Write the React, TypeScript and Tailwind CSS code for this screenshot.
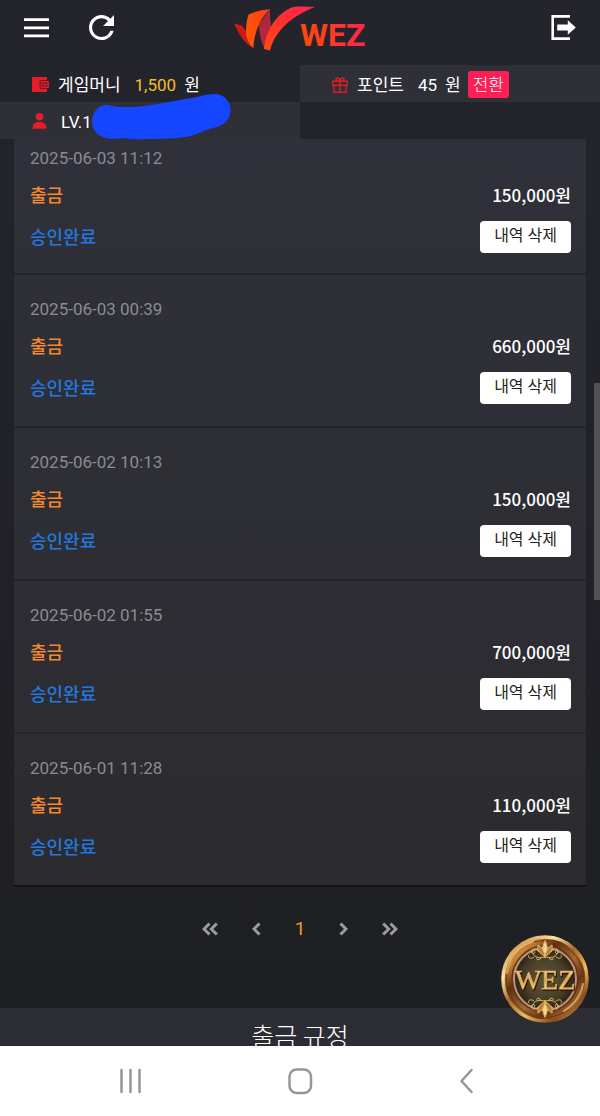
import React from 'react';

type Withdrawal = { date: string; amount: string };

const withdrawals: Withdrawal[] = [
  { date: '2025-06-03 11:12', amount: '150,000' },
  { date: '2025-06-03 00:39', amount: '660,000' },
  { date: '2025-06-02 10:13', amount: '150,000' },
  { date: '2025-06-02 01:55', amount: '700,000' },
  { date: '2025-06-01 11:28', amount: '110,000' },
];

function MenuIcon() {
  return (
    <svg width="25" height="20" viewBox="0 0 25 20" fill="none" stroke="#fff" strokeWidth="2.7" aria-hidden="true">
      <path d="M0 1.6h25M0 9.8h25M0 17.8h25" />
    </svg>
  );
}

function RefreshIcon() {
  return (
    <svg width="25" height="25" viewBox="4 4 16 16" fill="#fff" aria-hidden="true">
      <path d="M17.65 6.35A7.96 7.96 0 0 0 12 4c-4.42 0-7.99 3.58-7.99 8s3.57 8 7.99 8c3.73 0 6.84-2.55 7.73-6h-2.08A5.99 5.99 0 0 1 12 18c-3.31 0-6-2.69-6-6s2.69-6 6-6c1.66 0 3.14.69 4.22 1.78L13 11h7V4l-2.35 2.35z" />
    </svg>
  );
}

function LogoutIcon() {
  return (
    <svg width="25" height="25" viewBox="0 0 25 25" aria-hidden="true">
      <path d="M19 1.4H1.7v22.200H19" fill="none" stroke="#fff" strokeWidth="2.600" />
      <path d="M6.200 9.500h10.600V5.200l8 7.300-8 7.300v-4.300H6.200z" fill="#fff" />
    </svg>
  );
}

function Logo() {
  return (
    <svg width="132" height="46" viewBox="0 0 132 46" className="overflow-visible" role="img" aria-label="WEZ">
      <defs>
        <linearGradient id="sweep" x1="0" y1="1" x2="1" y2="0">
          <stop offset="0" stopColor="#ff4a12" />
          <stop offset="0.500" stopColor="#ff3030" />
          <stop offset="1" stopColor="#ff2550" />
        </linearGradient>
        <linearGradient id="orange" x1="0" y1="1" x2="1" y2="0">
          <stop offset="0" stopColor="#ff5a00" />
          <stop offset="1" stopColor="#fb4018" />
        </linearGradient>
        <linearGradient id="word" x1="66" y1="0" x2="132" y2="0" gradientUnits="userSpaceOnUse">
          <stop offset="0" stopColor="#ff4a05" />
          <stop offset="0.450" stopColor="#ff3c24" />
          <stop offset="1" stopColor="#ff2450" />
        </linearGradient>
        <linearGradient id="fold" x1="0" y1="0" x2="0" y2="1">
          <stop offset="0" stopColor="#a82a3c" />
          <stop offset="1" stopColor="#b8233f" />
        </linearGradient>
      </defs>
      <path d="M0 17.500 8 19.500 13 27 19.300 42C11 38 5 29 0 17.500z" fill="#cc1c12" />
      <path d="M36 3.300 25 18C25 27 27 36 31 43L38 24C36.500 17 35.500 10 36 3.300z" fill="url(#fold)" />
      <path d="M14.500 8.500C21 5.500 28 4 36 3.300C26 12 20.500 26 19.300 42C14.500 37.500 11.500 31 12 24C12.200 18 13 13 14.500 8.500z" fill="url(#orange)" />
      <path d="M30 43C32 24 42 7.500 59 .900C66 .200 74 .300 81 .900C57 10 41 25 36 44.500z" fill="url(#sweep)" />
      <text x="66" y="40" fontFamily="Roboto, sans-serif" fontSize="32" fontWeight="700" fill="url(#word)">WEZ</text>
    </svg>
  );
}

function WalletIcon() {
  return (
    <svg width="17" height="15" viewBox="0 0 17 15" aria-hidden="true">
      <path d="M1 0h14v3.200H9.500C8.400 3.200 7.600 4 7.600 5v5c0 1 .8 1.800 1.900 1.800H15V15H1a1 1 0 0 1-1-1V1a1 1 0 0 1 1-1z" fill="#e81c28" />
      <rect x="9.200" y="4.600" width="7" height="5.800" fill="#7d1f2a" stroke="#e81c28" strokeWidth="1.300" />
      <path d="M11.300 7.500h2.600M12.600 6.200v2.600" stroke="#e81c28" />
    </svg>
  );
}

function GiftIcon() {
  return (
    <svg width="16" height="16" viewBox="0 0 16 16" fill="none" stroke="#d81f28" strokeWidth="1.500" aria-hidden="true">
      <path d="M.8 4.200h14.400v4H.8zM2 8.200h12v7H2zM8 4.200v11M8 4C5 4 4 3.300 4 2.200 4 .5 7.500.2 8 4zM8 4c3 0 4-.7 4-1.800C12 .5 8.500.2 8 4z" />
    </svg>
  );
}

function UserIcon() {
  return (
    <svg width="15" height="16" viewBox="0 0 15 16" fill="#e81c28" aria-hidden="true">
      <circle cx="7.500" cy="3.800" r="3.800" />
      <path d="M.7 15.800v-2C.7 10.500 4 9 7.500 9s6.800 1.500 6.800 4.800v2z" />
    </svg>
  );
}

function Scribble() {
  return (
    <svg className="absolute left-[91px] -top-[8px]" width="141" height="46" viewBox="0 0 141 46" fill="#1447ff" aria-hidden="true">
      <path d="M1 28C1 17 8 10 17 11Q22 12 27 13L42 13C60 12 76 8 94 5C106 4 112 0 124 0C133 0 139 7 139.500 15C140 25 133 32 122 34C112 36 108 41 95 43C81 45 67 45 52 45Q42 46 34 44L20 45C8 44 1 37 1 28z" />
    </svg>
  );
}

function Chevron({ count, flip }: { count: 1 | 2; flip?: boolean }) {
  return (
    <svg
      width={count === 2 ? 16 : 9}
      height="14"
      viewBox={count === 2 ? '0 0 16 14' : '0 0 9 14'}
      fill="none"
      stroke="#9b9ba3"
      strokeWidth="3"
      className={flip ? '-scale-x-100' : ''}
      aria-hidden="true"
    >
      <path d={count === 2 ? 'M7.500 1.500 2 7l5.500 5.500M14.800 1.500 9.300 7l5.500 5.500' : 'M7.500 1.500 2 7l5.500 5.500'} />
    </svg>
  );
}

function Ornament() {
  return (
    <g fill="none" stroke="#dfb568" strokeWidth="1" strokeLinecap="round">
      <path d="M44 6C41 11 41 16 44 23C47 16 47 11 44 6z" fill="#f4d691" />
      <path d="M44 21C38 19 36 14 37 10C41 12 43 16 44 21zM44 21C50 19 52 14 51 10C47 12 45 16 44 21z" fill="#b97f2f" />
      <path d="M43 22C36 24 32 21 31 16M45 22C52 24 56 21 57 16M38 17C34 11 28 15 31 18C33 20 35 17 33 16M50 17C54 11 60 15 57 18C55 20 53 17 55 16M33 22C29 25 26 22 28 20M55 22C59 25 62 22 60 20M40 23C38 26 35 25 36 23M48 23C50 26 53 25 52 23" />
    </g>
  );
}

function Medallion() {
  return (
    <svg width="88" height="88" viewBox="0 0 88 88" aria-hidden="true">
      <defs>
        <linearGradient id="rim" x1="0.100" y1="0" x2="0.900" y2="1">
          <stop offset="0" stopColor="#b87a30" />
          <stop offset="0.250" stopColor="#ffe3a0" />
          <stop offset="0.450" stopColor="#a5692c" />
          <stop offset="0.650" stopColor="#f1bd63" />
          <stop offset="0.850" stopColor="#8a4d1b" />
          <stop offset="1" stopColor="#e0a04a" />
        </linearGradient>
        <linearGradient id="band" x1="0" y1="0" x2="1" y2="1">
          <stop offset="0" stopColor="#e0a250" />
          <stop offset="0.200" stopColor="#c98737" />
          <stop offset="0.350" stopColor="#5f2f12" />
          <stop offset="0.550" stopColor="#a56a30" />
          <stop offset="0.700" stopColor="#6a3513" />
          <stop offset="1" stopColor="#dc9b4a" />
        </linearGradient>
        <radialGradient id="face">
          <stop offset="0" stopColor="#5f573a" />
          <stop offset="0.650" stopColor="#4a4029" />
          <stop offset="1" stopColor="#2c2217" />
        </radialGradient>
        <linearGradient id="gold" x1="0" y1="0" x2="0" y2="1">
          <stop offset="0" stopColor="#fff0bd" />
          <stop offset="0.500" stopColor="#e0a552" />
          <stop offset="1" stopColor="#ffe2a0" />
        </linearGradient>
        <filter id="relief">
          <feDropShadow dx="1" dy="1.500" stdDeviation="0.600" floodColor="#2a1206" />
        </filter>
      </defs>
      <circle cx="44" cy="44" r="42" fill="url(#band)" stroke="url(#rim)" strokeWidth="3.500" />
      <circle cx="44" cy="44" r="38.500" fill="none" stroke="#6b3a18" strokeWidth="1" />
      <circle cx="44" cy="44" r="31" fill="url(#face)" stroke="#b9947a" strokeWidth="2" />
      <circle cx="44" cy="44" r="33" fill="none" stroke="#65331a" strokeWidth="1.500" />
      <path d="M6 38C9 22 18 11 32 7M82 49C80 60 73 70 63 76" fill="none" stroke="#ffd488" strokeWidth="2" opacity="0.600" strokeLinecap="round" />
      <Ornament />
      <g transform="matrix(1 0 0 -1 0 88)"><Ornament /></g>
      <text x="44" y="54" fontFamily="Liberation Serif, serif" fontSize="28" textAnchor="middle" fill="url(#gold)" stroke="#dba557" strokeWidth="0.600" filter="url(#relief)">WEZ</text>
    </svg>
  );
}

function Header() {
  return (
    <header className="grid h-[65px] shrink-0 grid-cols-[1fr_auto_1fr] items-start px-6">
      <div className="flex gap-10 pt-[15px]">
        <button type="button" aria-label="메뉴" className="flex h-[25px] items-center"><MenuIcon /></button>
        <button type="button" aria-label="새로고침" className="flex h-[25px] items-center"><RefreshIcon /></button>
      </div>
      <a href="#home" className="pt-[6px]"><Logo /></a>
      <button type="button" aria-label="로그아웃" className="justify-self-end pt-[15px]"><LogoutIcon /></button>
    </header>
  );
}

function AccountBar() {
  return (
    <section className="grid shrink-0 grid-cols-2 text-[17px] leading-6 text-white">
      <div className="flex h-[37px] items-center pt-[2px] pl-8">
        <WalletIcon />
        <span className="ml-[9px]">게임머니</span>
        <span className="ml-[14px] text-[#f5bd2b]">1,500</span>
        <span className="ml-2">원</span>
      </div>
      <div className="flex h-[37px] items-center bg-[#2f2f38] pt-[2px] pl-8">
        <GiftIcon />
        <span className="ml-[9px]">포인트</span>
        <span className="ml-[14px]">45</span>
        <span className="ml-2">원</span>
        <button type="button" className="ml-[7px] h-[27px] rounded-[3px] bg-[#ff1f54] px-[5px] font-light">전환</button>
      </div>
      <div className="relative flex h-[37px] items-center bg-[#2f2f38] pl-8">
        <UserIcon />
        <span className="ml-[14px] pt-[2px]">LV.1</span>
        <Scribble />
      </div>
    </section>
  );
}

function Entry({ date, amount }: Withdrawal) {
  return (
    <li className="h-[153px] border-b-2 border-[#23232b] pt-[22px] pr-[15px] pl-4 first:h-[136px] first:pt-[7px] last:h-[151px] last:border-b-0">
      <time className="block text-[17px] leading-6 text-[#8b8b93]">{date}</time>
      <div className="mt-[13px] flex h-6 items-center justify-between leading-6">
        <span className="pt-[2px] text-[18px] font-medium text-[#f58a2c]">출금</span>
        <strong className="font-['Noto_Sans_CJK_KR',sans-serif] text-[17px] font-medium text-white">{amount}원</strong>
      </div>
      <div className="mt-[14px] flex h-8 items-center justify-between">
        <span className="pt-[2px] text-[18px] font-medium leading-6 text-[#2478df]">승인완료</span>
        <button type="button" className="h-8 rounded-[4px] bg-white px-[14px] pb-[3px] text-[16px] leading-6 text-[#1f1f24]">내역 삭제</button>
      </div>
    </li>
  );
}

function Pagination() {
  return (
    <nav aria-label="페이지" className="flex h-[121px] items-start justify-center pt-[30px]">
      <div className="flex h-6 items-center">
        <button type="button" aria-label="처음" className="px-[17px]"><Chevron count={2} /></button>
        <button type="button" aria-label="이전" className="px-[17px]"><Chevron count={1} /></button>
        <button type="button" aria-current="page" className="px-[17px] text-[19px] leading-6 text-[#f39a18]">1</button>
        <button type="button" aria-label="다음" className="px-[17px]"><Chevron count={1} flip /></button>
        <button type="button" aria-label="마지막" className="px-[17px]"><Chevron count={2} flip /></button>
      </div>
    </nav>
  );
}

function SystemBar() {
  return (
    <nav aria-label="시스템" className="flex h-[70px] shrink-0 items-center justify-between bg-white pr-[21%] pl-[20%]">
      <button type="button" aria-label="최근 앱">
        <svg width="22" height="26" viewBox="0 0 22 26" fill="none" stroke="#969696" strokeWidth="2.500" strokeLinecap="round" aria-hidden="true">
          <path d="M1.500 2v22M10.500 2v22M19.500 2v22" />
        </svg>
      </button>
      <button type="button" aria-label="홈">
        <svg width="26" height="28" viewBox="0 0 26 28" fill="none" stroke="#969696" strokeWidth="2.500" aria-hidden="true">
          <rect x="1.500" y="2.500" width="21.500" height="23.500" rx="7" />
        </svg>
      </button>
      <button type="button" aria-label="뒤로">
        <svg width="14" height="26" viewBox="0 0 14 26" fill="none" stroke="#969696" strokeWidth="2.500" strokeLinecap="round" strokeLinejoin="round" aria-hidden="true">
          <path d="M11.500 2 1.500 13l10 11" />
        </svg>
      </button>
    </nav>
  );
}

export default function App() {
  return (
    <div className="flex h-screen flex-col overflow-hidden bg-white font-['Roboto','Noto_Sans_CJK_KR',sans-serif]">
      <div className="relative flex min-h-0 flex-1 flex-col overflow-hidden bg-linear-to-b from-[#24242d] to-[#1e1f22]">
        <Header />
        <AccountBar />
        <main className="min-h-0 flex-1 overflow-hidden">
          <ul className="mx-[14px] border-b-2 border-[#131316] bg-linear-to-b from-[#30303a] to-[#2b2b2f]">
            {withdrawals.map((item) => <Entry key={item.date} {...item} />)}
          </ul>
          <Pagination />
          <section className="bg-[#2c2c35] pt-[9px] pb-4 text-center">
            <h2 className="font-['Noto_Sans_CJK_KR',sans-serif] text-[25px] leading-9 font-light text-white">출금 규정</h2>
          </section>
        </main>
        <div className="absolute top-[383px] right-0 h-[217px] w-[6px] bg-[#505055]" />
        <button type="button" aria-label="WEZ" className="absolute right-[11px] bottom-[23px]"><Medallion /></button>
      </div>
      <SystemBar />
    </div>
  );
}
